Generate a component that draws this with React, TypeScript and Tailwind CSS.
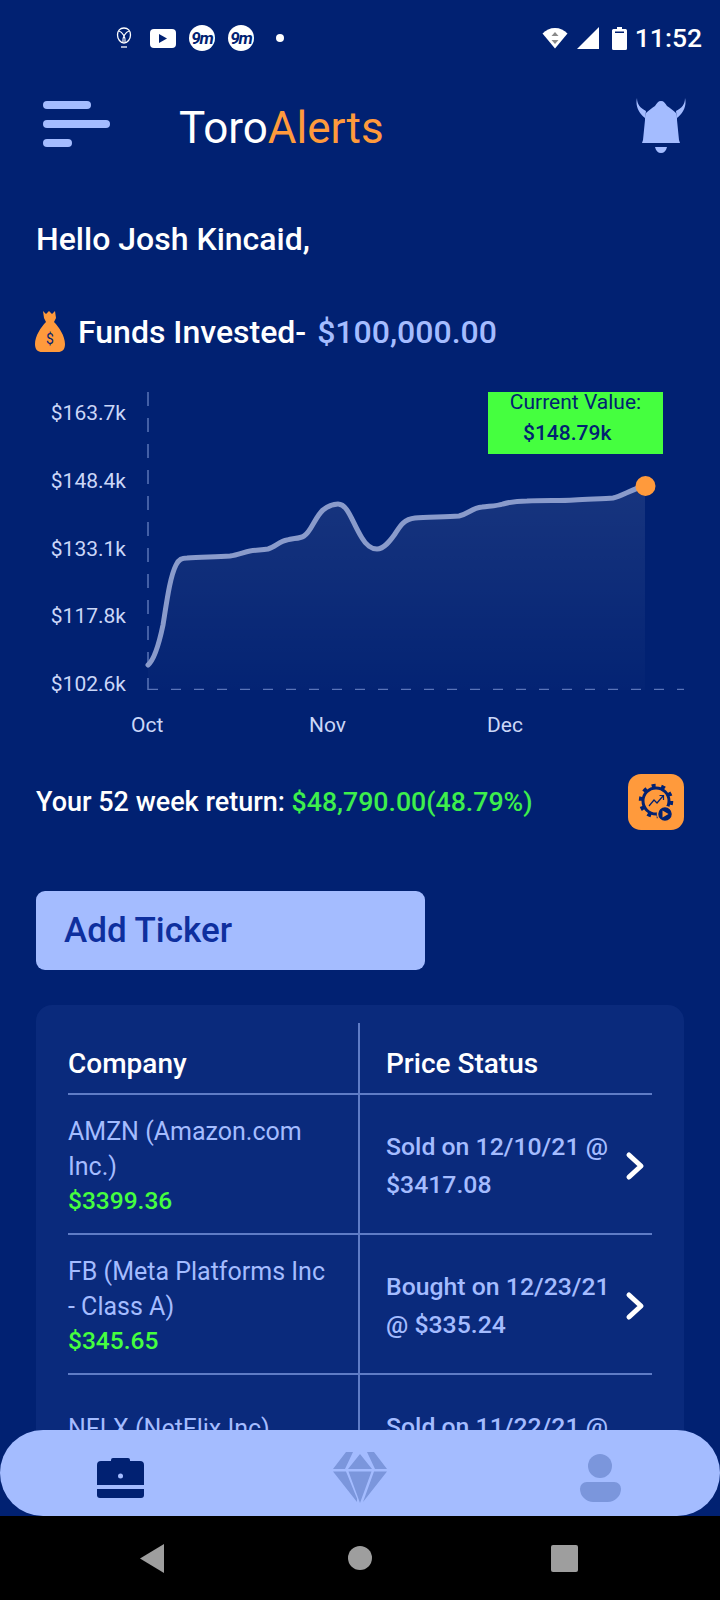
// ToroAlerts portfolio home screen
// Value line in chart coordinates (svg starts at y 392 on the page)
const line =
  "M148 273 C154 268 159 252 163 233 C167 208 170 185 176 173 C179 167 182 166 187 166 C200 165 215 165 230 164 " +
  "C238 163 244 160 250 159 C257 158 262 158 268 157 C275 155 280 149 287 148 C293 146 299 147 304 144 " +
  "C311 140 315 125 323 118 C329 113 333 112 338 112 C348 112 352 130 362 146 C366 153 372 157 377 157 " +
  "C384 157 390 149 395 142 C400 134 404 127 415 126 C425 125 445 125 459 124 C468 122 472 116 482 115 " +
  "C490 114 497 114 503 112 C510 110 518 109 527 109 C545 108 560 109 574 108 C590 107 605 107 613 106 " +
  "C622 104 632 97 645 94"

function NineM() {
  return (
    <div className="w-[26px] h-[26px] rounded-full bg-white flex items-center justify-center text-[#012172] text-[17px] font-bold italic tracking-[-1px] leading-none">
      9m
    </div>
  )
}

function StatusBar() {
  return (
    <div className="h-[76px] flex items-center pl-[115px] pr-[18px] text-white">
      <svg width="18" height="24" viewBox="0 0 18 24" fill="none" stroke="white" strokeWidth="1.3">
        <path d="M9 2C5 2 2.5 5 2.5 9c0 4 3 8 6.5 8s6.5-4 6.5-8c0-4-2.5-7-6.5-7Z" />
        <path d="M4 5c3 1 7 6 6 11M14 5c-3 1-7 6-6 11" />
        <path d="M6 21h6" />
      </svg>
      <div className="ml-[17px] w-[26px] h-[19px] rounded-[4px] bg-white flex items-center justify-center">
        <svg width="8" height="9" viewBox="0 0 8 9"><path d="M0 0l8 4.500-8 4.500Z" fill="#012172" /></svg>
      </div>
      <div className="ml-[13px]"><NineM /></div>
      <div className="ml-[13px]"><NineM /></div>
      <div className="ml-[22px] w-[8px] h-[8px] rounded-full bg-white" />
      <div className="flex-1" />
      <svg width="26" height="22" viewBox="0 0 26 22">
        <path d="M13 21.500 0.500 6.500C4 3 8 1 13 1s9 2 12.500 5.500Z" fill="white" />
        <path d="M13 5l3.500 4h-7Z" fill="#8a8a8a" />
        <path d="M13 17l-3.500-4h7Z" fill="#8a8a8a" />
      </svg>
      <svg className="ml-[9px]" width="22" height="22" viewBox="0 0 22 22"><path d="M22 0v22H0Z" fill="white" /></svg>
      <svg className="ml-[13px]" width="15" height="23" viewBox="0 0 15 23">
        <path d="M5 0h5v2h3.500a1.500 1.500 0 0 1 1.500 1.500V21.500a1.500 1.500 0 0 1-1.500 1.500h-12A1.500 1.500 0 0 1 0 21.500V3.500A1.500 1.500 0 0 1 1.500 2H5Z" fill="white" />
        <path d="M3 4.500h9V6H3Z" fill="#012172" />
      </svg>
      <span className="ml-[8px] text-[26.500px] font-medium leading-none">11:52</span>
    </div>
  )
}

function Header() {
  return (
    <div className="h-[104px] flex items-center pl-[43px] pr-[34px]">
      <div className="w-[67px] mb-[8px] flex flex-col gap-[11px]">
        <div className="h-[8px] w-[48px] rounded-full bg-[#a4bcff]" />
        <div className="h-[8px] w-[67px] rounded-full bg-[#a4bcff]" />
        <div className="h-[8px] w-[29px] rounded-full bg-[#a4bcff]" />
      </div>
      <div className="ml-[69px] text-[44px] font-normal leading-none text-white">
        Toro<span className="text-[#ff9a3c]">Alerts</span>
      </div>
      <div className="flex-1" />
      <svg className="mb-[4px]" width="50" height="56" viewBox="0 0 50 56" fill="#a4bcff">
        <path d="M1 0C1 6 4 10 10 13l-1 7C3 15 -1 8 1 0ZM49 0c0 6-3 10-9 13l1 7c6-5 10-12 8-20Z" />
        <path d="M25 3c3 0 4 2 6 5 3 2 6 4 9 7 1 2 1 4 1 7l2 20 1 3H6l1-3 2-20c0-3 0-5 1-7 3-3 6-5 9-7 2-3 3-5 6-5Z" />
        <path d="M19 49h12c-1 4-3 6-6 6s-5-2-6-6Z" />
      </svg>
    </div>
  )
}

function Chart() {
  return (
    <div className="relative mt-[39px] h-[298px] flex">
      <div className="w-[126px] pt-[4px] h-[309px] flex flex-col justify-between items-end text-[21px] leading-[34px] text-[#cbd7f8]">
        <span>$163.7k</span>
        <span>$148.4k</span>
        <span>$133.1k</span>
        <span>$117.8k</span>
        <span>$102.6k</span>
      </div>
      <svg className="absolute left-0 top-0" width="720" height="298" viewBox="0 0 720 298" fill="none">
        <defs>
          <linearGradient id="area" x1="0" y1="0" x2="0" y2="1">
            <stop offset="0" stopColor="#ffffff" stopOpacity="0.09" />
            <stop offset="1" stopColor="#ffffff" stopOpacity="0.01" />
          </linearGradient>
        </defs>
        <path d={`${line} V298 H148 Z`} fill="url(#area)" />
        <path d="M148 0V298" stroke="#5a74b8" strokeWidth="1.500" strokeDasharray="14 12" />
        <path d="M148 297.500H684" stroke="#5a74b8" strokeWidth="1.500" strokeDasharray="10 13" />
        <path d={line} stroke="#8a9bcb" strokeWidth="5" strokeLinecap="round" />
        <circle cx="645.500" cy="94" r="10" fill="#ff9a3c" />
      </svg>
      <div className="absolute left-[488px] top-0 w-[175px] h-[62px] bg-[#45ff3f] text-[#012172] text-[21px] leading-[20px]">
        <div className="text-center">Current Value:</div>
        <div className="mt-[11px] pl-[35px] font-medium">$148.79k</div>
      </div>
    </div>
  )
}

function Row({ name, price, status }: { name: string[]; price: string; status: string[] }) {
  return (
    <div className="flex h-[138px]">
      <div className="w-[292px] border-r-2 border-[#5f7cc6] pr-[10px] flex flex-col justify-center text-[25px] leading-[35px] text-[#a4bcff] pt-[2px]">
        {name.map((n) => <div key={n}>{n}</div>)}
        <div className="text-[#45ff3f] font-medium text-[24.500px] leading-[33px]">{price}</div>
      </div>
      <div className="flex-1 pl-[26px] pt-[3px] flex items-center">
        <div className="w-[237px] text-[24.800px] font-medium leading-[38px] text-[#a4bcff]">
          {status.map((s) => <div key={s}>{s}</div>)}
        </div>
        <svg className="ml-[1px]" width="24" height="30" viewBox="0 0 24 30" fill="none" stroke="white" strokeWidth="5" strokeLinecap="round" strokeLinejoin="round">
          <path d="M5 4l12 11L5 26" />
        </svg>
      </div>
    </div>
  )
}

function BottomNav() {
  return (
    <div className="absolute left-0 right-0 bottom-0">
      <div className="h-[86px] pt-[9px] rounded-[43px] bg-[#a4bcff] flex items-center">
        <div className="w-[240px] flex justify-center">
          <svg width="47" height="40" viewBox="0 0 47 40" fill="#012172">
            <path d="M16 0h15a2 2 0 0 1 2 2v1h10a4 4 0 0 1 4 4v20a0 0 0 0 1 0 0H0V7a4 4 0 0 1 4-4h10V2a2 2 0 0 1 2-2Z" />
            <path d="M0 31h47v6a3 3 0 0 1-3 3H3a3 3 0 0 1-3-3Z" />
            <circle cx="23.500" cy="18" r="2.500" fill="#a4bcff" />
          </svg>
        </div>
        <div className="w-[240px] flex justify-center">
          <svg width="54" height="51" viewBox="0 0 54 51" fill="#7b96dc">
            <path d="M13 0h7L12 17H0ZM34 0h7l13 17H42ZM27 2 39 17H15ZM0 19.500h13l11 27L24 50ZM15.500 19.500h23L27 51ZM41 19.500h13L30 50Z" />
          </svg>
        </div>
        <div className="w-[240px] flex justify-center">
          <div className="flex flex-col items-center gap-[4px]">
            <div className="w-[24px] h-[24px] rounded-full bg-[#7b96dc]" />
            <div className="w-[41px] h-[20px] rounded-b-[20px] rounded-t-[10px] bg-[#7b96dc]" />
          </div>
        </div>
      </div>
      <div className="h-[84px] bg-black pl-[140px] flex items-center">
        <svg width="24" height="29" viewBox="0 0 24 29"><path d="M24 0v29L0 14.500Z" fill="#9e9e9e" /></svg>
        <div className="ml-[184px] w-[24px] h-[24px] rounded-full bg-[#9e9e9e]" />
        <div className="ml-[179px] w-[27px] h-[27px] rounded-[2px] bg-[#9e9e9e]" />
      </div>
    </div>
  )
}

export default function App() {
  return (
    <div className="relative w-[720px] h-[1600px] overflow-hidden bg-[#012172] font-['Roboto',sans-serif]">
      <StatusBar />
      <Header />
      <div className="px-[36px]">
        <div className="mt-[39px] text-[32px] font-medium leading-[40px] text-white">Hello Josh Kincaid,</div>
      </div>
      <div className="mt-[52px] pl-[35px] flex items-center h-[42px]">
        <svg width="30" height="42" viewBox="0 0 30 42">
          <path d="M8 0l3 3 3-3 3 3 3-3 1 7-2 4c5 5 11 14 11 22 0 6-3 8-7 8H7c-4 0-7-2-7-8 0-8 6-17 11-22L9 7Z" fill="#ff9a3c" />
          <text x="15" y="33" textAnchor="middle" fontSize="14" fontFamily="Roboto" fill="#012172">$</text>
        </svg>
        <div className="ml-[13px] text-[32px] font-medium leading-[40px] text-white">
          Funds Invested- <span className="ml-[3px] text-[#a4bcff]">$100,000.00</span>
        </div>
      </div>
      <Chart />
      <div className="mt-[18px] ml-[148px] flex text-[21px] leading-[34px] text-[#cbd7f8]">
        <span className="w-[178px] -ml-[17px]">Oct</span>
        <span className="w-[178px]">Nov</span>
        <span>Dec</span>
      </div>
      <div className="mt-[32px] pl-[36px] pr-[36px] flex items-center h-[56px]">
        <div className="text-[27px] font-medium text-white leading-none">
          Your 52 week return: <span className="text-[26.700px] text-[#3def4c]">$48,790.00(48.79%)</span>
        </div>
        <div className="flex-1" />
        <div className="w-[56px] h-[56px] rounded-[13px] bg-[#ff9a3c] flex items-center justify-center">
          <svg width="44" height="44" viewBox="0 0 44 44" fill="none">
            <circle cx="22" cy="21" r="13" stroke="#012172" strokeWidth="3" />
            <circle cx="22" cy="21" r="15.500" stroke="#012172" strokeWidth="3.500" strokeDasharray="4 5.740" />
            <path d="M15 26l5-6 3 3 6-7M25.500 15.500h4V20" stroke="#012172" strokeWidth="1.200" />
            <circle cx="31" cy="34" r="7.500" fill="#012172" stroke="#ff9a3c" strokeWidth="1.500" />
            <path d="M28.500 30.500v7l6-3.500Z" fill="#ff9a3c" />
          </svg>
        </div>
      </div>
      <div className="mt-[61px] ml-[36px] w-[389px] h-[79px] pt-[2px] rounded-[9px] bg-[#a4bcff] flex items-center pl-[28px] text-[35px] font-medium text-[#0e2f9e]">
        Add Ticker
      </div>
      <div className="mt-[35px] mx-[36px] rounded-[16px] bg-[#0a2a7c] px-[32px] pt-[18px] pb-[40px]">
        <div className="flex h-[72px] border-b-2 border-[#5f7cc6] text-[28px] font-medium text-white">
          <div className="w-[292px] border-r-2 border-[#5f7cc6] flex items-center pt-[12px]">Company</div>
          <div className="pl-[26px] flex items-center pt-[12px]">Price Status</div>
        </div>
        <div className="border-b-2 border-[#5f7cc6]">
          <Row name={["AMZN (Amazon.com", "Inc.)"]} price="$3399.36" status={["Sold on 12/10/21 @", "$3417.08"]} />
        </div>
        <div className="border-b-2 border-[#5f7cc6]">
          <Row name={["FB (Meta Platforms Inc", "- Class A)"]} price="$345.65" status={["Bought on 12/23/21", "@ $335.24"]} />
        </div>
        <Row name={["NFLX (NetFlix Inc)"]} price="$612.09" status={["Sold on 11/22/21 @", "$668.23"]} />
      </div>
      <BottomNav />
    </div>
  )
}
